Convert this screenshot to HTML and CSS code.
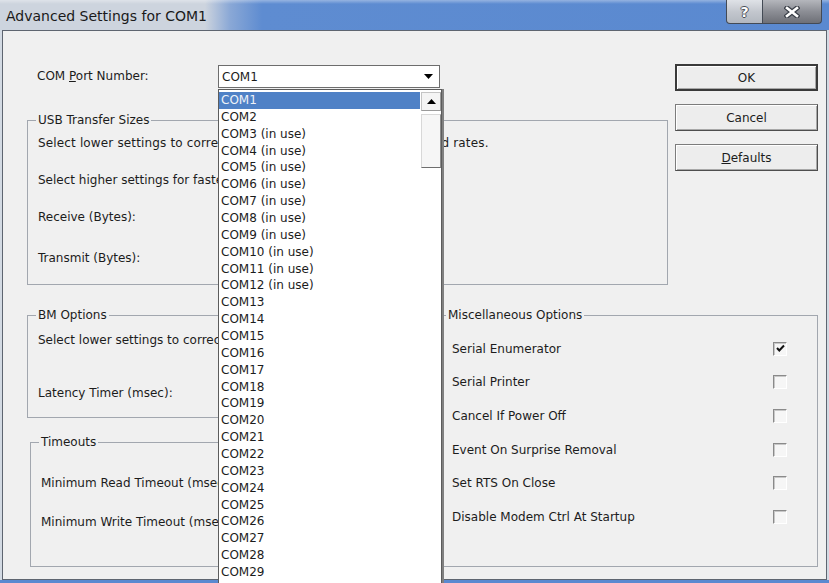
FILE: index.html
```html
<!DOCTYPE html>
<html>
<head>
<meta charset="utf-8">
<link rel="stylesheet" href="styles.css">
</head>
<body>
<div class="window">
  <div class="titlebar">
    <div class="title">Advanced Settings for COM1</div>
    <div class="tbtn help"><span class="qmark">?</span></div>
    <div class="tbtn close">
      <svg width="16" height="12" viewBox="0 0 16 12"><path d="M3 2 L13 10 M13 2 L3 10" stroke="#3a3f48" stroke-width="5" stroke-linecap="square"/><path d="M3 2 L13 10 M13 2 L3 10" stroke="#ffffff" stroke-width="2.6" stroke-linecap="square"/></svg>
    </div>
  </div>
  <div class="client">
    <div class="top">
      <div class="leftcol">
        <div class="comrow">
          <div class="comlabel">COM <u>P</u>ort Number:</div>
          <div class="combo">
            <span class="comboval">COM1</span>
            <svg class="comboarrow" width="9" height="5" viewBox="0 0 9 5"><path d="M0 0 H9 L4.5 5 Z" fill="#000"/></svg>
          </div>
        </div>
        <fieldset class="group usb">
          <legend>USB Transfer Sizes</legend>
          <div class="line l1 wide">Select lower settings to correct performance problems at low baud rates.</div>
          <div class="line l2">Select higher settings for faster performance.</div>
          <div class="line l3">Receive (Bytes):</div>
          <div class="line l4">Transmit (Bytes):</div>
        </fieldset>
      </div>
      <div class="buttons">
        <div class="btn default">OK</div>
        <div class="btn">Cancel</div>
        <div class="btn"><u>D</u>efaults</div>
      </div>
    </div>
    <div class="bottom">
      <div class="leftcol2">
        <fieldset class="group bm">
          <legend>BM Options</legend>
          <div class="line b1">Select lower settings to correct response problems.</div>
          <div class="line b2">Latency Timer (msec):</div>
        </fieldset>
        <fieldset class="group timeouts">
          <legend>Timeouts</legend>
          <div class="line t1">Minimum Read Timeout (msec):</div>
          <div class="line t2">Minimum Write Timeout (msec):</div>
        </fieldset>
      </div>
      <fieldset class="group misc">
        <legend>Miscellaneous Options</legend>
        <div class="opt"><span>Serial Enumerator</span><span class="cb"><svg width="11" height="11" viewBox="0 0 11 11"><path d="M2 5 L4.3 7.5 L9 2.5" stroke="#111" stroke-width="2" fill="none"/></svg></span></div>
        <div class="opt"><span>Serial Printer</span><span class="cb"></span></div>
        <div class="opt"><span>Cancel If Power Off</span><span class="cb"></span></div>
        <div class="opt"><span>Event On Surprise Removal</span><span class="cb"></span></div>
        <div class="opt"><span>Set RTS On Close</span><span class="cb"></span></div>
        <div class="opt"><span>Disable Modem Ctrl At Startup</span><span class="cb"></span></div>
      </fieldset>
    </div>
  </div>

  <div class="dropdown">
    <div class="items">
      <div class="item sel">COM1</div>
      <div class="item">COM2</div>
      <div class="item">COM3 (in use)</div>
      <div class="item">COM4 (in use)</div>
      <div class="item">COM5 (in use)</div>
      <div class="item">COM6 (in use)</div>
      <div class="item">COM7 (in use)</div>
      <div class="item">COM8 (in use)</div>
      <div class="item">COM9 (in use)</div>
      <div class="item">COM10 (in use)</div>
      <div class="item">COM11 (in use)</div>
      <div class="item">COM12 (in use)</div>
      <div class="item">COM13</div>
      <div class="item">COM14</div>
      <div class="item">COM15</div>
      <div class="item">COM16</div>
      <div class="item">COM17</div>
      <div class="item">COM18</div>
      <div class="item">COM19</div>
      <div class="item">COM20</div>
      <div class="item">COM21</div>
      <div class="item">COM22</div>
      <div class="item">COM23</div>
      <div class="item">COM24</div>
      <div class="item">COM25</div>
      <div class="item">COM26</div>
      <div class="item">COM27</div>
      <div class="item">COM28</div>
      <div class="item">COM29</div>
      <div class="item">COM30</div>
      <div class="item">COM31</div>
    </div>
    <div class="vscroll">
      <div class="sbup"><svg width="9" height="5" viewBox="0 0 9 5"><path d="M0 5 H9 L4.5 0 Z" fill="#000"/></svg></div>
      <div class="thumb"></div>
    </div>
  </div>
</div>
</body>
</html>
```

FILE: styles.css
```css
* { box-sizing: border-box; }
html, body { margin: 0; padding: 0; }
body {
  width: 829px;
  height: 583px;
  overflow: hidden;
  font-family: "DejaVu Sans", "Liberation Sans", sans-serif;
  font-size: 12px;
  color: #1c1c1c;
}
.window {
  position: relative;
  width: 829px;
  height: 583px;
  overflow: hidden;
  display: flex;
  flex-direction: column;
  background: linear-gradient(to top, #5a89d0 0, #5a89d0 3px, #d3dae3 3px);
}
.titlebar {
  height: 30px;
  flex: none;
  display: flex;
  align-items: flex-start;
  background:
    linear-gradient(to bottom, rgba(255,255,255,0.35) 0, rgba(255,255,255,0) 4px),
    linear-gradient(to right, #cdd4de 0, #cdd4de 205px, #8aa8d6 230px, #5e8cd1 262px, #5a89d0 100%);
}
.title {
  font-size: 14px;
  line-height: 32px;
  padding-left: 6px;
  color: #1a1a1a;
  flex: 1;
}
.tbtn {
  height: 24px;
  border: 1px solid #434a55;
  border-top: none;
  display: flex;
  align-items: center;
  justify-content: center;
}
.help {
  width: 37px;
  border-radius: 0 0 0 4px;
  background: linear-gradient(to bottom, #dfe2e7 0, #c3c7ce 50%, #b2b7bf 100%);
}
.qmark {
  font-family: "DejaVu Sans", sans-serif;
  font-weight: bold;
  font-size: 14px;
  color: #ffffff;
  text-shadow: 1px 0 0 #4a4f58, -1px 0 0 #4a4f58, 0 1px 0 #4a4f58, 0 -1px 0 #4a4f58;
}
.close {
  width: 59px;
  margin-right: 7px;
  border-left: none;
  border-radius: 0 0 4px 0;
  background: linear-gradient(to bottom, #b4b6bc 0, #8c8e95 50%, #6e7077 100%);
}
.client {
  flex: 1;
  margin: 0 2px 3px 2px;
  border: 1px solid #5e6570;
  background: #f0f0f0;
  display: flex;
  flex-direction: column;
}
.top {
  display: flex;
  padding-left: 24px;
}
.leftcol {
  width: 641px;
}
.comrow {
  display: flex;
  margin-top: 34px;
  height: 23px;
}
.comlabel {
  width: 191px;
  padding-left: 10px;
  line-height: 22px;
}
.combo {
  width: 222px;
  height: 23px;
  border: 1px solid #6d6d6d;
  background: #fff;
  display: flex;
  align-items: center;
  justify-content: space-between;
  padding: 0 6px 0 3px;
}
.group {
  margin: 0;
  padding: 0 10px;
  border: 1px solid #a2a7af;
  min-width: 0;
}
.group legend {
  padding: 0 2px;
  margin-left: -2px;
  line-height: 14px;
  font-size: 12px;
}
.line {
  line-height: 16px;
  height: 16px;
  white-space: nowrap;
}
.wide { letter-spacing: 0.15px; }
.usb { margin-top: 25px; padding-bottom: 18px; }
.usb .l1 { margin-top: 8px; }
.usb .l2 { margin-top: 21px; }
.usb .l3 { margin-top: 21px; }
.usb .l4 { margin-top: 25px; }
.buttons {
  width: 143px;
  margin-left: 7px;
  margin-top: 33px;
  display: flex;
  flex-direction: column;
  gap: 13px;
}
.btn {
  height: 27px;
  border: 1px solid #7c7c7c;
  border-right-color: #4e4e4e;
  border-bottom-color: #4e4e4e;
  box-shadow: inset 1px 1px 0 #ffffff, inset -1px -1px 0 #a8a8a8;
  background: #ededed;
  display: flex;
  align-items: center;
  justify-content: center;
}
.btn.default {
  border: 2px solid #3a3a3a;
}
.bottom {
  display: flex;
  padding-left: 24px;
  margin-top: 23px;
  gap: 8px;
}
.leftcol2 {
  width: 406px;
  display: flex;
  flex-direction: column;
}
.bm { padding-bottom: 16px; }
.bm .b1 { margin-top: 10px; }
.bm .b2 { margin-top: 37px; }
.timeouts { margin-top: 17px; margin-left: 3px; padding-bottom: 36px; }
.timeouts .t1 { margin-top: 26px; }
.timeouts .t2 { margin-top: 23px; }
.misc {
  width: 377px;
  padding: 0 30px 32px 10px;
}
.misc legend { margin-left: -6px; }
.opt {
  height: 33.6px;
  display: flex;
  align-items: center;
  justify-content: space-between;
}
.misc legend + .opt { margin-top: 10px; }
.cb {
  width: 14px;
  height: 14px;
  border: 1px solid #8a8a8a;
  border-right-color: #ffffff;
  border-bottom-color: #ffffff;
  box-shadow: inset 1px 1px 0 #c8c8c8;
  background: #f6f6f6;
  display: flex;
  align-items: center;
  justify-content: center;
}
.dropdown {
  position: absolute;
  left: 218px;
  top: 89px;
  width: 224px;
  height: 500px;
  border: 1px solid #5c5c5c;
  background: #ffffff;
  box-shadow: 2px 0 0 #808080;
  display: flex;
}
.items {
  flex: 1;
  padding-top: 2px;
}
.item {
  height: 16.86px;
  line-height: 15.86px;
  padding-top: 1px;
  padding-left: 2px;
  white-space: nowrap;
  color: #1c1c1c;
}
.item.sel {
  background: #4f81c6;
  color: #eef2f8;
  margin-right: 1px;
}
.vscroll {
  width: 20px;
  display: flex;
  flex-direction: column;
}
.sbup {
  margin-top: 2px;
  height: 19px;
  border: 1px solid #c4c4c4;
  border-right-color: #9a9a9a;
  border-bottom-color: #9a9a9a;
  background: #f4f4f4;
  display: flex;
  align-items: center;
  justify-content: center;
}
.thumb {
  margin-top: 3px;
  height: 54px;
  border: 1px solid #d8d8d8;
  border-right-color: #8c8c8c;
  border-bottom-color: #6e6e6e;
  background: #f6f6f6;
}
```
